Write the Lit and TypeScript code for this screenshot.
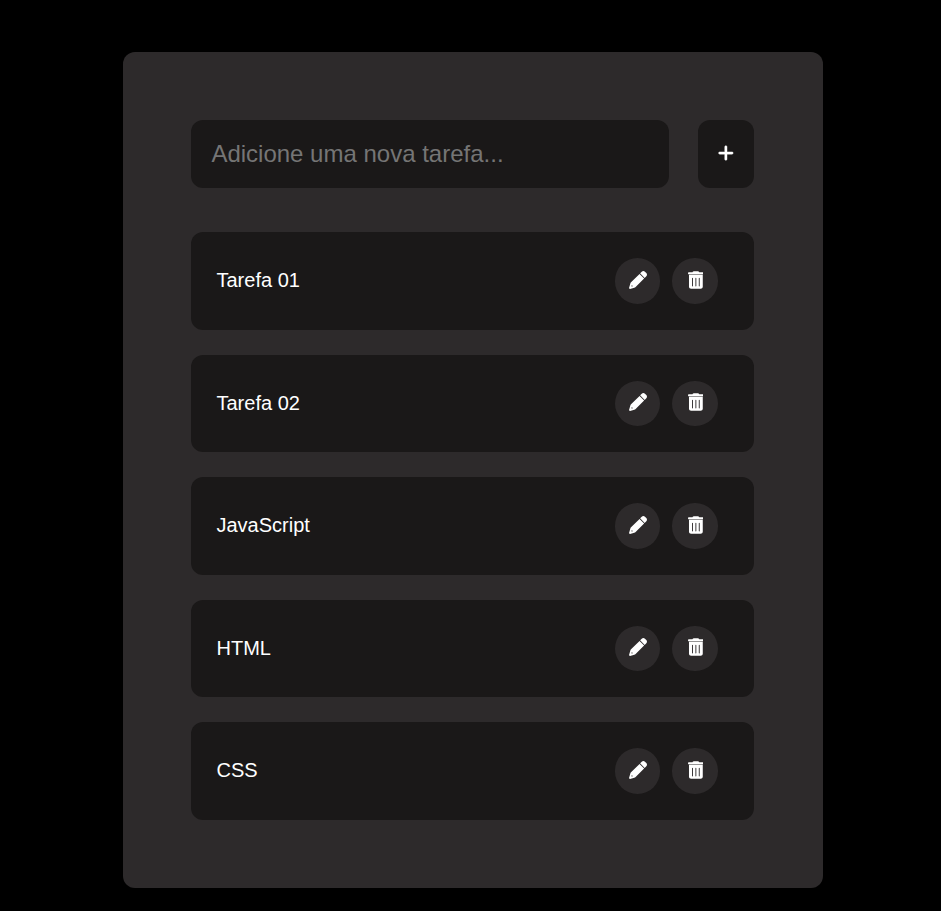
import { LitElement, html, css, svg } from "lit";
import { customElement, state } from "lit/decorators.js";

const plus = svg`<path d="M256 80c0-17.7-14.3-32-32-32s-32 14.3-32 32V224H48c-17.7 0-32 14.3-32 32s14.3 32 32 32H192V432c0 17.7 14.3 32 32 32s32-14.3 32-32V288H400c17.7 0 32-14.3 32-32s-14.3-32-32-32H256V80z"/>`;
const pencil = svg`<path d="M430 212L188.5 453.4C178.1 463.8 165.2 471.5 151.1 475.6L30.8 511C13 515-3 499 1 481.2L36.4 360.9C40.5 346.8 48.2 333.9 58.6 323.5L300 82zM68 444L112 432L80 400zM492.7 58.8C517.7 83.7 517.7 124.3 492.7 149.3L446 196L316 66L362.7 19.3C387.7-5.7 428.3-5.7 453.3 19.3z"/>`;
const trash = svg`<path d="M135.2 21.7C140.6 10.8 151.7 4 163.8 4H284.2c12.1 0 23.2 6.8 28.6 17.7L320 32h100c17.7 0 28 14.3 28 32s-10.3 32-28 32H28C10.3 96 0 81.7 0 64S10.3 32 28 32h100zM28 112H420V448c0 32-28.7 56-60 56H88c-32 0-60-24-60-56V112zm100 80c-7 0-13 6-13 13V426c0 7 6 13 13 13s13-6 13-13V205c0-7-6-13-13-13zm96 0c-7 0-13 6-13 13V426c0 7 6 13 13 13s13-6 13-13V205c0-7-6-13-13-13zm96 0c-7 0-13 6-13 13V426c0 7 6 13 13 13s13-6 13-13V205c0-7-6-13-13-13z"/>`;

@customElement("app-root")
export class AppRoot extends LitElement {
  @state() private tasks = ["Tarefa 01", "Tarefa 02", "JavaScript", "HTML", "CSS"];

  static styles = css`
    :host {
      display: block;
      box-sizing: border-box;
      min-height: 100vh;
      padding: 52px 0 23px 123px;
      background: #000;
      color: #fff;
      font-family: "Liberation Sans", Arial, sans-serif;
    }
    * { box-sizing: border-box; }
    .card {
      width: 700px;
      height: 836px;
      padding: 68px 69px 68px 68px;
      border-radius: 12px;
      background: #2d2a2b;
    }
    .entry {
      display: flex;
      justify-content: space-between;
      height: 68px;
      margin-bottom: 44.25px;
    }
    .field, .add {
      border: 0;
      border-radius: 12px;
      background: #1a1818;
      font-family: inherit;
      color: #fff;
    }
    .field {
      width: 478px;
      padding: 0 20.4px;
      font-size: 24px;
      outline: none;
    }
    .field::placeholder { color: #757575; opacity: 1; }
    .add {
      display: flex;
      align-items: center;
      justify-content: center;
      width: 56px;
      padding: 0 0 2px;
    }
    .list {
      display: flex;
      flex-direction: column;
      gap: 25px;
      margin: 0;
      padding: 0;
      list-style: none;
    }
    .task {
      display: flex;
      align-items: center;
      gap: 12.2px;
      height: 97.5px;
      padding: 0 36.2px 0 25.5px;
      border-radius: 12px;
      background: #1a1818;
      font-size: 20px;
    }
    .name { flex: 1; padding-bottom: 0.5px; }
    .action {
      display: flex;
      align-items: center;
      justify-content: center;
      width: 45.5px;
      height: 45.5px;
      padding: 0 0 2.6px 0.9px;
      border: 0;
      border-radius: 50%;
      background: #2d2a2b;
      color: #fff;
    }
    svg { display: block; fill: currentColor; }
    .plus { width: 15.75px; height: 18px; stroke: currentColor; stroke-width: 12px; }
    .pencil { width: 18px; height: 18px; }
    .trash { width: 15.75px; height: 18px; }
  `;

  render() {
    return html`
      <main class="card">
        <div class="entry">
          <input class="field" placeholder="Adicione uma nova tarefa..." />
          <button class="add" aria-label="Adicionar">
            <svg class="plus" viewBox="0 0 448 512">${plus}</svg>
          </button>
        </div>
        <ul class="list">
          ${this.tasks.map(
            (task) => html`<li class="task">
              <span class="name">${task}</span>
              <button class="action" aria-label="Editar">
                <svg class="pencil" viewBox="0 0 512 512">${pencil}</svg>
              </button>
              <button class="action" aria-label="Excluir">
                <svg class="trash" viewBox="0 0 448 512">${trash}</svg>
              </button>
            </li>`
          )}
        </ul>
      </main>
    `;
  }
}
